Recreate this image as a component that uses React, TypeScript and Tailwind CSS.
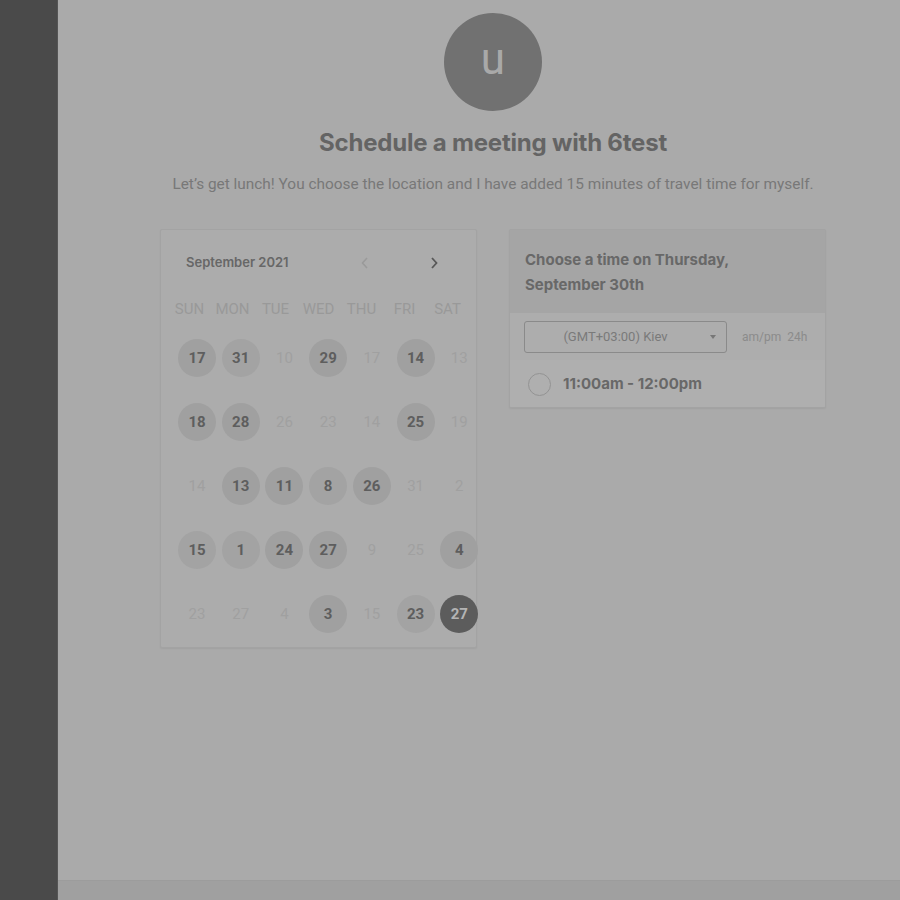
type Day = { n: number; s: "a" | "d" | "t" | "sel" };

const weeks: Day[][] = [
  [
    { n: 17, s: "a" },
    { n: 31, s: "t" },
    { n: 10, s: "d" },
    { n: 29, s: "a" },
    { n: 17, s: "d" },
    { n: 14, s: "a" },
    { n: 13, s: "d" },
  ],
  [
    { n: 18, s: "a" },
    { n: 28, s: "a" },
    { n: 26, s: "d" },
    { n: 23, s: "d" },
    { n: 14, s: "d" },
    { n: 25, s: "a" },
    { n: 19, s: "d" },
  ],
  [
    { n: 14, s: "d" },
    { n: 13, s: "a" },
    { n: 11, s: "a" },
    { n: 8, s: "t" },
    { n: 26, s: "a" },
    { n: 31, s: "d" },
    { n: 2, s: "d" },
  ],
  [
    { n: 15, s: "t" },
    { n: 1, s: "t" },
    { n: 24, s: "a" },
    { n: 27, s: "a" },
    { n: 9, s: "d" },
    { n: 25, s: "d" },
    { n: 4, s: "a" },
  ],
  [
    { n: 23, s: "d" },
    { n: 27, s: "d" },
    { n: 4, s: "d" },
    { n: 3, s: "a" },
    { n: 15, s: "d" },
    { n: 23, s: "t" },
    { n: 27, s: "sel" },
  ],
];

const weekdays = ["SUN", "MON", "TUE", "WED", "THU", "FRI", "SAT"];

function DayCell({ d }: { d: Day }) {
  if (d.s === "d") {
    return (
      <div className="flex h-[38px] w-[38px] items-center justify-center text-[15px] text-[#a0a0a0]">
        {d.n}
      </div>
    );
  }
  const cls =
    d.s === "sel"
      ? "bg-[#5c5c5c] text-[#b4b4b4]"
      : d.s === "t"
        ? "bg-[#a3a3a3] text-[#5e5e5e]"
        : "bg-[#a0a0a0] text-[#5e5e5e]";
  return (
    <div
      className={`flex h-[38px] w-[38px] items-center justify-center rounded-full text-[15px] font-bold ${cls}`}
    >
      {d.n}
    </div>
  );
}

export default function App() {
  return (
    <div
      className="flex h-[900px] w-[900px] overflow-hidden bg-[#aaaaaa]"
      style={{ fontFamily: "Roboto, 'Liberation Sans', sans-serif" }}
    >
      <aside className="h-full w-[58px] shrink-0 border-r border-[#555555] bg-[#4a4a4a]" />
      <div className="flex flex-1 flex-col">
        <main className="flex flex-1 flex-col items-center pl-[28px]">
          <div className="mt-[13px] flex h-[98px] w-[98px] items-center justify-center rounded-full bg-[#717171] pb-[6px] text-[44px] text-[#a9a9a9]">
            u
          </div>
          <h1
            className="mt-[14px] text-[24px] font-bold tracking-[-0.2px] text-[#646464]"
            style={{ fontFamily: "Inter, 'Liberation Sans', sans-serif" }}
          >
            Schedule a meeting with 6test
          </h1>
          <p className="mt-[12px] text-[15.4px] text-[#787878]">
            Let’s get lunch! You choose the location and I have added 15 minutes of travel time for myself.
          </p>

          <div className="mt-[33px] flex gap-[32px]">
            {/* calendar */}
            <div className="h-[419px] w-[317px] rounded-[2px] border border-[#a3a3a3] bg-[#acacac] shadow-[0_1px_2px_rgba(0,0,0,0.06)]">
              <div className="flex items-center pl-[25px] pr-[36px] pt-[23px]">
                <span
                  className="text-[13px] font-semibold text-[#676767]"
                  style={{ fontFamily: "Inter, 'Liberation Sans', sans-serif" }}
                >
                  September 2021
                </span>
                <svg className="ml-[70px]" width="12" height="16" viewBox="0 0 12 16" fill="none">
                  <path d="M8 3 L3.5 8 L8 13" stroke="#9a9a9a" strokeWidth="1.6" />
                </svg>
                <svg className="ml-auto" width="12" height="16" viewBox="0 0 12 16" fill="none">
                  <path d="M4 3 L8.5 8 L4 13" stroke="#585858" strokeWidth="1.8" />
                </svg>
              </div>
              <div className="mt-[25px] grid w-[308px] grid-cols-7 pl-[7px] text-center text-[15px] text-[#999999]">
                {weekdays.map((w) => (
                  <div key={w}>{w}</div>
                ))}
              </div>
              <div className="mt-[19px] flex flex-col gap-[26px] pl-[17px]">
                {weeks.map((wk, i) => (
                  <div key={i} className="grid w-[306px] grid-cols-7 justify-items-start gap-x-0">
                    {wk.map((d, j) => (
                      <div key={j} className="w-[43.6px]">
                        <DayCell d={d} />
                      </div>
                    ))}
                  </div>
                ))}
              </div>
            </div>

            {/* time slots */}
            <div className="h-[179px] w-[317px] overflow-hidden rounded-[2px] border border-[#a3a3a3] bg-[#adadad] shadow-[0_1px_2px_rgba(0,0,0,0.06)]">
              <div
                className="h-[83px] bg-[#a5a5a5] px-[15px] pt-[17px] text-[15px] font-bold leading-[25px] text-[#686868]"
                style={{ fontFamily: "Inter, 'Liberation Sans', sans-serif" }}
              >
                Choose a time on Thursday,
                <br />
                September 30th
              </div>
              <div className="flex h-[47px] items-center bg-[#adadad] pl-[14px]">
                <div className="relative flex h-[32px] w-[203px] items-center justify-center rounded-[3px] border border-[#8a8a8a] pr-[20px] text-[13px] text-[#7a7a7a]">
                  (GMT+03:00) Kiev
                  <span className="absolute right-[10px] top-[13px] h-0 w-0 border-x-[3.5px] border-t-[4px] border-x-transparent border-t-[#777777]" />
                </div>
                <span className="ml-[15px] text-[12px] text-[#8b8b8b]">am/pm&nbsp;&nbsp;24h</span>
              </div>
              <div className="flex h-[48px] items-center bg-[#afafaf] pl-[18px]">
                <span className="h-[23px] w-[23px] rounded-full border-[1.5px] border-[#939393]" />
                <span
                  className="ml-[12px] text-[15px] font-bold text-[#686868]"
                  style={{ fontFamily: "Inter, 'Liberation Sans', sans-serif" }}
                >
                  11:00am - 12:00pm
                </span>
              </div>
            </div>
          </div>
        </main>
        <div className="h-[20px] border-t border-[#9c9c9c] bg-[#a0a0a0]" />
      </div>
    </div>
  );
}
